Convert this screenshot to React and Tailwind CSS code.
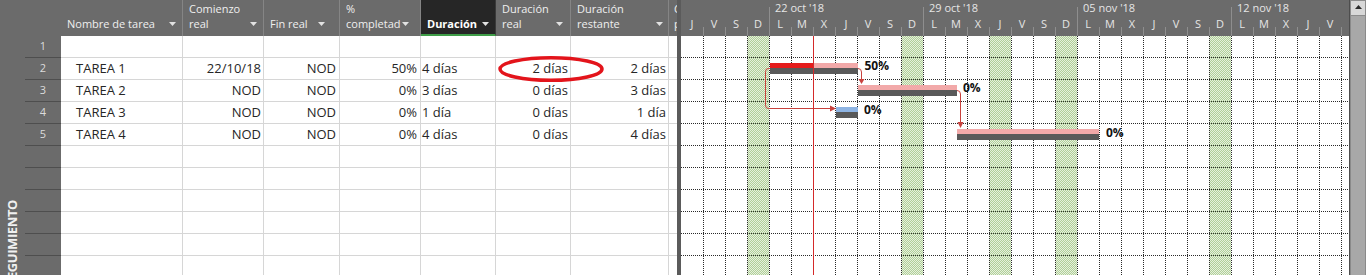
import React from 'react';

const COLS = [
  { key: 'n', w: 'w-[122px]', title: ['Nombre de tarea'], body: 'justify-start pl-[15px]', arrow: 'mr-[6px]' },
  { key: 'c', w: 'w-[81px]', title: ['Comienzo', 'real'], body: 'justify-end pr-[2px]', arrow: 'mr-[6px]' },
  { key: 'f', w: 'w-[76px]', title: ['Fin real'], body: 'justify-end pr-[3px]', arrow: 'mr-[14px]' },
  { key: 'p', w: 'w-[81px]', title: ['%', 'completad'], body: 'justify-end pr-[3px]', arrow: 'mr-[11px]' },
  { key: 'd', w: 'w-[75px]', title: ['Duración'], body: 'justify-start pl-[1px]', arrow: 'mr-[6px]', active: true },
  { key: 'r', w: 'w-[75px]', title: ['Duración', 'real'], body: 'justify-end pr-[2px]', arrow: 'mr-[7px]' },
  { key: 's', w: 'w-[98px]', title: ['Duración', 'restante'], body: 'justify-end pr-[2px]', arrow: 'mr-[5px]' },
];

const ROWS = [
  { n: '1', cells: ['', '', '', '', '', '', ''] },
  { n: '2', cells: ['TAREA 1', '22/10/18', 'NOD', '50%', '4 días', '2 días', '2 días'] },
  { n: '3', cells: ['TAREA 2', 'NOD', 'NOD', '0%', '3 días', '0 días', '3 días'] },
  { n: '4', cells: ['TAREA 3', 'NOD', 'NOD', '0%', '1 día', '0 días', '1 día'] },
  { n: '5', cells: ['TAREA 4', 'NOD', 'NOD', '0%', '4 días', '0 días', '4 días'] },
  { n: '', cells: [] },
  { n: '', cells: [] },
  { n: '', cells: [] },
  { n: '', cells: [] },
  { n: '', cells: [] },
  { n: '', cells: [] },
];

const DAYS = 'JVSDLMXJVSDLMXJVSDLMXJVSDLMXJVS'.split('');
const WEEKS = ["22 oct '18", "29 oct '18", "05 nov '18", "12 nov '18"];

function Arrow({ className }) {
  return (
    <svg width="7" height="4" className={`shrink-0 ${className}`}>
      <polygon points="0,0 7,0 3.5,4" fill="#e2e2e2" />
    </svg>
  );
}

function SideStrip() {
  return (
    <div className="flex w-[25px] shrink-0 items-start justify-center overflow-hidden bg-[#6b6b6b] pr-px pt-[200px]">
      <span className="rotate-180 whitespace-nowrap text-[13px] font-bold leading-[14px] tracking-[-0.4px] text-[#f0f0f0] [writing-mode:vertical-rl]">
        SEGUIMIENTO
      </span>
    </div>
  );
}

function HeaderCell({ c }) {
  return (
    <div
      className={`flex h-full shrink-0 items-end justify-between border-r pl-[6px] ${c.w} ${
        c.active
          ? 'border-r-[#3a3a3a] border-b-2 border-b-[#3f9d48] bg-[#262626] pb-[3px] font-bold text-white'
          : 'border-r-[#858585] pb-[5px]'
      }`}
    >
      <div className="overflow-hidden whitespace-nowrap">
        {c.title.map((t) => (
          <div key={t}>{t}</div>
        ))}
      </div>
      <Arrow className={`mb-[5px] ${c.arrow}`} />
    </div>
  );
}

function Row({ n, cells }) {
  return (
    <div className="flex h-[22px] shrink-0 text-[13px]">
      <div className="flex w-[36px] shrink-0 items-center justify-center border-b border-[#4e4e4e] bg-[#6b6b6b] text-[11px] text-[#dcdcdc]">
        {n}
      </div>
      {COLS.map((c, i) => (
        <div
          key={c.key}
          className={`flex shrink-0 items-center whitespace-nowrap border-b border-r border-[#d6d6d6] ${c.w} ${c.body}`}
        >
          {cells[i] || ''}
        </div>
      ))}
      <div className="w-[8px] shrink-0 border-b border-[#d6d6d6]" />
    </div>
  );
}

function Table() {
  return (
    <div className="relative flex w-[652px] shrink-0 flex-col">
      <div className="flex h-[36px] shrink-0 bg-[#6b6b6b] text-[11px] leading-[15px] text-[#efefef]">
        <div className="w-[36px] shrink-0" />
        {COLS.map((c) => (
          <HeaderCell key={c.key} c={c} />
        ))}
        <div className="flex h-full w-[8px] shrink-0 items-end overflow-hidden whitespace-nowrap pb-[5px] pl-[5px]">
          <div>
            <div>Comienzo</div>
            <div>previsto</div>
          </div>
        </div>
      </div>
      {ROWS.map((r, i) => (
        <Row key={i} n={r.n} cells={r.cells} />
      ))}
      <svg className="pointer-events-none absolute left-[471px] top-[54px]" width="110" height="30">
        <ellipse cx="55" cy="15" rx="51" ry="11.3" fill="none" stroke="#e3141b" strokeWidth="3.5" />
      </svg>
    </div>
  );
}

function GanttHeader() {
  return (
    <div className="h-[36px] shrink-0 overflow-hidden bg-[#6b6b6b] text-[11px] text-[#e6e6e6]">
      <div className="flex h-[18px]">
        <div className="w-[88px] shrink-0" />
        {WEEKS.map((w) => (
          <div key={w} className="mt-[7px] w-[154px] shrink-0 border-l border-[#8e8e8e] pl-[5px]">
            <div className="-mt-[6px] whitespace-nowrap leading-[13px]">{w}</div>
          </div>
        ))}
      </div>
      <div className="flex h-[18px]">
        {DAYS.map((d, i) => (
          <div key={i} className="flex w-[22px] shrink-0">
            <div
              className={`w-px shrink-0 self-end ${i === 0 ? 'h-0' : d === 'L' ? 'h-full bg-[#8e8e8e]' : 'h-[9px] bg-[#8e8e8e]'}`}
            />
            <div className="flex-1 pr-px text-center leading-[12px]">{d}</div>
          </div>
        ))}
      </div>
    </div>
  );
}

function GanttBody() {
  const W = 668;
  const H = 239;
  const shaded = [66, 220, 308, 374, 528];
  const vlines = Array.from({ length: 30 }, (_, i) => 22 * (i + 1) + 0.5);
  const hlines = Array.from({ length: 11 }, (_, i) => 21.5 + 22 * i);
  const link = '#c8413d';
  return (
    <svg width={W} height={H} className="block shrink-0">
      <defs>
        <pattern id="wkend" width="2" height="2" patternUnits="userSpaceOnUse">
          <rect width="2" height="2" fill="#e6f0dd" />
          <rect width="1" height="1" fill="#b0cf98" />
          <rect x="1" y="1" width="1" height="1" fill="#b0cf98" />
        </pattern>
      </defs>
      {shaded.map((x) => (
        <rect key={x} x={x} y={0} width={22} height={H} fill="url(#wkend)" />
      ))}
      {vlines.map((x) => (
        <line key={x} x1={x} x2={x} y1={0} y2={H} stroke="#2a2a2a" strokeDasharray="1 1" shapeRendering="crispEdges" />
      ))}
      {hlines.map((y) => (
        <line key={y} x1={0} x2={W} y1={y} y2={y} stroke="#2a2a2a" strokeDasharray="1 1" shapeRendering="crispEdges" />
      ))}

      {/* TAREA 1 */}
      <rect x={89} y={27} width={43} height={5} fill="#e41b1b" />
      <rect x={132} y={27} width={45} height={5} fill="#f2a9a9" />
      <rect x={89} y={32} width={88} height={6} fill="#595959" />
      {/* TAREA 2 */}
      <rect x={177} y={49} width={99} height={5} fill="#f2a9a9" />
      <rect x={177} y={54} width={99} height={6} fill="#595959" />
      {/* TAREA 3 */}
      <rect x={155} y={71} width={22} height={5} fill="#8eb4e3" />
      <rect x={155} y={76} width={22} height={6} fill="#595959" />
      {/* TAREA 4 */}
      <rect x={276} y={93} width={142} height={5} fill="#f2a9a9" />
      <rect x={276} y={98} width={142} height={6} fill="#595959" />

      {/* links */}
      <path d="M177,32.5 Q180.5,32.5 180.5,36 V44" fill="none" stroke={link} />
      <polygon points="177.5,43 183.5,43 180.5,48" fill={link} />
      <path d="M89,32.5 H87.5 Q84.5,32.5 84.5,35.5 V69.5 Q84.5,72.5 87.5,72.5 H150" fill="none" stroke={link} />
      <polygon points="149,69.5 149,75.5 155,72.5" fill={link} />
      <path d="M276,54.5 Q279.5,54.5 279.5,58 V87" fill="none" stroke={link} />
      <polygon points="276.5,86 282.5,86 279.5,92" fill={link} />

      {/* status line */}
      <line x1={132.5} x2={132.5} y1={0} y2={H} stroke="#d42a2a" shapeRendering="crispEdges" />

      <g fontFamily="'Open Sans', sans-serif" fontWeight="700" fontSize="12" fill="#111">
        <text x={183.5} y={34}>50%</text>
        <text x={282} y={56}>0%</text>
        <text x={183} y={78}>0%</text>
        <text x={425} y={101}>0%</text>
      </g>
    </svg>
  );
}

function Gantt() {
  return (
    <div className="flex w-[668px] shrink-0 flex-col overflow-hidden">
      <GanttHeader />
      <GanttBody />
    </div>
  );
}

function Scrollbar() {
  return (
    <div className="flex w-[17px] shrink-0 flex-col border-l border-[#4d4d4d] bg-[#a3a3a3]">
      <div className="flex h-[16px] shrink-0 items-start justify-center border border-[#8c8c8c] bg-[#d8d8d8] pt-[4px]">
        <svg width="7" height="4">
          <polygon points="3.5,0 7,4 0,4" fill="#2b2b2b" />
        </svg>
      </div>
      <div className="flex-1 border-x border-[#8a8a8a] bg-[#a8a8a8]" />
    </div>
  );
}

export default function App() {
  return (
    <div className="flex h-[275px] w-[1366px] overflow-hidden bg-white font-['Open_Sans',sans-serif] text-[#262626]">
      <SideStrip />
      <Table />
      <div className="w-[4px] shrink-0 bg-[#5b5b5b]" />
      <Gantt />
      <Scrollbar />
    </div>
  );
}
